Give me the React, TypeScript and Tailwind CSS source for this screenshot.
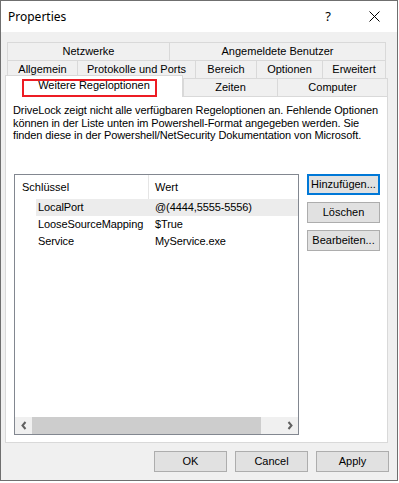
import React from "react";

const tab =
  "flex items-center justify-center h-[18px] border-l border-t border-[#d9d9d9] bg-[#f0f0f0] text-[11px] leading-[13px] whitespace-nowrap";

function Btn({ label, focused, w = "w-[73px]" }: { label: string; focused?: boolean; w?: string }) {
  return (
    <div
      className={
        "h-[21px] flex items-center justify-center bg-[#e1e1e1] text-[11px] leading-[13px] whitespace-nowrap " +
        w +
        (focused ? " border-2 border-[#0078d7]" : " border border-[#adadad]")
      }
    >
      {label}
    </div>
  );
}

export default function App() {
  return (
    <div className="w-[399px] h-[483px] bg-white font-['Liberation_Sans',Arial,sans-serif] text-black">
      <div className="w-[398px] h-[481px] border border-[#6f6f6f] bg-[#f0f0f0] flex flex-col">
        {/* Title bar */}
        <div className="h-[31px] bg-white flex items-center shrink-0">
          <span className="ml-[7px] text-[12px] font-['Noto_Sans',sans-serif]">Properties</span>
          <span className="ml-auto text-[13px] font-['Noto_Sans',sans-serif]">?</span>
          <svg width="11" height="11" viewBox="0 0 11 11" className="ml-[38px] mr-[17px]">
            <line x1="0.5" y1="0.5" x2="10.5" y2="10.5" stroke="#000" strokeWidth="1" />
            <line x1="10.5" y1="0.5" x2="0.5" y2="10.5" stroke="#000" strokeWidth="1" />
          </svg>
        </div>

        {/* Body */}
        <div className="pt-[10px] pl-[4px]">
          <div className="ml-[2px] w-[379px] flex">
            <div className={tab + " w-[162px]"}>Netzwerke</div>
            <div className={tab + " w-[217px] border-r"}>Angemeldete Benutzer</div>
          </div>
          <div className="ml-[2px] w-[379px] flex">
            <div className={tab + " w-[70px]"}>Allgemein</div>
            <div className={tab + " w-[118px]"}>Protokolle und Ports</div>
            <div className={tab + " w-[61px]"}>Bereich</div>
            <div className={tab + " w-[66px]"}>Optionen</div>
            <div className={tab + " w-[64px] border-r"}>Erweitert</div>
          </div>
          <div className="-mt-[3px] h-[21px] w-[383px] flex items-start">
            <div className="relative z-10 w-[178px] h-[22px] bg-white border-l border-t border-r border-[#d9d9d9] flex justify-center pt-[3px] text-[11px] leading-[13px] whitespace-nowrap">
              Weitere Regeloptionen
              <div className="absolute left-[16px] top-[3px] w-[135px] h-[18px] border-2 border-[#ed1c24]" />
            </div>
            <div className={tab + " mt-[3px] w-[94px]"}>Zeiten</div>
            <div className={tab + " mt-[3px] flex-1 border-r"}>Computer</div>
          </div>

          {/* Panel */}
          <div className="w-[383px] h-[347px] bg-white border border-[#d9d9d9] flex flex-col">
            <div className="h-[77px] pt-[7px] pl-[7px] text-[11px] leading-[12.5px] tracking-[-0.1px] whitespace-nowrap">
              <p>DriveLock zeigt nicht alle verfügbaren Regeloptionen an. Fehlende Optionen</p>
              <p>können in der Liste unten im Powershell-Format angegeben werden. Sie</p>
              <p>finden diese in der Powershell/NetSecurity Dokumentation von Microsoft.</p>
            </div>
            <div className="flex ml-[8px]">
              <div className="w-[285px] h-[261px] border border-[#828790] flex flex-col text-[11px] leading-[13px]">
                <div className="h-[24px] flex shrink-0">
                  <div className="w-[134px] pl-[7px] flex items-center border-r border-[#e5e5e5]">Schlüssel</div>
                  <div className="pl-[6px] flex items-center">Wert</div>
                </div>
                <div className="ml-[21px] h-[17px] flex items-center bg-[#ececec] tracking-[-0.1px]">
                  <div className="w-[117px] pl-[2px]">LocalPort</div>
                  <div className="pl-[2px]">@(4444,5555-5556)</div>
                </div>
                <div className="ml-[21px] h-[17px] flex items-center tracking-[-0.1px]">
                  <div className="w-[117px] pl-[2px]">LooseSourceMapping</div>
                  <div className="pl-[2px]">$True</div>
                </div>
                <div className="ml-[21px] h-[17px] flex items-center tracking-[-0.1px]">
                  <div className="w-[117px] pl-[2px]">Service</div>
                  <div className="pl-[2px]">MyService.exe</div>
                </div>
                <div className="flex-1" />
                <div className="h-[17px] flex shrink-0">
                  <div className="w-[17px] bg-[#f0f0f0] flex items-center justify-center">
                    <svg width="8" height="9" viewBox="0 0 8 9">
                      <polyline points="5.5,1 2.5,4.5 5.5,8" fill="none" stroke="#606060" strokeWidth="2" />
                    </svg>
                  </div>
                  <div className="w-[229px] bg-[#cdcdcd]" />
                  <div className="flex-1 bg-[#f0f0f0]" />
                  <div className="w-[17px] bg-[#f0f0f0] flex items-center justify-center">
                    <svg width="8" height="9" viewBox="0 0 8 9">
                      <polyline points="2.5,1 5.5,4.5 2.5,8" fill="none" stroke="#606060" strokeWidth="2" />
                    </svg>
                  </div>
                </div>
              </div>
              <div className="ml-[8px] flex flex-col gap-[7px]">
                <Btn label="Hinzufügen..." focused />
                <Btn label="Löschen" />
                <Btn label="Bearbeiten..." />
              </div>
            </div>
          </div>
        </div>

        {/* Bottom buttons */}
        <div className="mt-[8px] flex justify-end gap-[8px] pr-[8px]">
          <Btn label="OK" />
          <Btn label="Cancel" />
          <Btn label="Apply" />
        </div>
      </div>
    </div>
  );
}
